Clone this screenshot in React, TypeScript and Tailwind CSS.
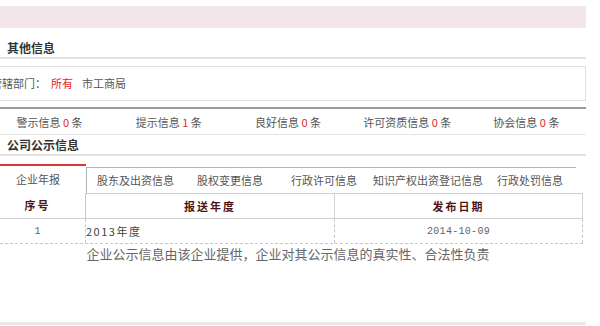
import React from "react";

const stats = [
  { label: "警示信息", n: "0" },
  { label: "提示信息", n: "1" },
  { label: "良好信息", n: "0" },
  { label: "许可资质信息", n: "0" },
  { label: "协会信息", n: "0" },
];

export default function App() {
  return (
    <div className="w-[600px] h-[326px] overflow-hidden bg-white font-['Noto_Sans_CJK_SC',sans-serif] text-[11px] text-[#555]">
      <div className="ml-[-10px] w-[596px] pt-[6px] flex flex-col">
        {/* pink bar */}
        <div className="h-[22px] bg-[#f2e5eb]" />

        {/* 其他信息 */}
        <div className="h-[29px] pt-[12px] pl-[17px] leading-[16px] text-[12px] font-bold text-[#333]">
          其他信息
        </div>
        <div className="h-[2px] bg-[#e2e2e2]" />

        <div className="mt-[7px] h-[35px] border border-[#e0e0e0] flex items-center text-[11px]">
          <span className="text-[#555]">管辖部门：</span>
          <span className="ml-[5px] text-[#e3262b]">所有</span>
          <span className="ml-[9px] text-[#555]">市工商局</span>
        </div>

        <div className="mt-[6px] h-[2px] bg-[#9a9a9a]" />

        {/* stats */}
        <div className="h-[26px] grid grid-cols-5 items-center border-b border-[#e5e5e5]">
          {stats.map((s) => (
            <div key={s.label} className="text-center leading-[14px]">
              {s.label} <span className="text-[#e3262b]">{s.n}</span> 条
            </div>
          ))}
        </div>

        {/* 公司公示信息 */}
        <div className="h-[19px] pl-[17px] flex items-center text-[12px] font-bold text-[#333]">
          公司公示信息
        </div>
        <div className="h-[2px] bg-[#e2e2e2]" />

        {/* tabs */}
        <div className="mt-[8px] flex items-end">
          <div className="w-[96px] h-[29px] border-t-2 border-[#d9383a] flex items-center justify-center">
            企业年报
          </div>
          <div className="w-[490px] h-[26px] border-t border-l border-[#b5b5b5] flex items-center">
            <div className="w-[97px] text-center">股东及出资信息</div>
            <div className="w-[92px] text-center">股权变更信息</div>
            <div className="w-[96px] text-center">行政许可信息</div>
            <div className="w-[112px] text-center">知识产权出资登记信息</div>
            <div className="w-[92px] text-center">行政处罚信息</div>
          </div>
        </div>

        {/* table */}
        <div className="w-[593px]">
          <div className="flex h-[26px] border-b border-[#d0d0d0] font-bold text-[#4d1414] tracking-[2px]">
            <div className="w-[96px] border-r border-[#c8c8c8] flex items-center justify-center">
              序号
            </div>
            <div className="w-[249px] border-t border-r border-[#d0d0d0] flex items-center justify-center">
              报送年度
            </div>
            <div className="flex-1 border-t border-r border-[#d0d0d0] flex items-center justify-center">
              发布日期
            </div>
          </div>
          <div className="flex h-[25px] border-b border-dashed border-[#c8c8c8]">
            <div className="w-[96px] border-r border-dashed border-[#c8c8c8] flex items-center justify-center font-['Liberation_Mono',monospace] text-[10px] text-[#666]">
              1
            </div>
            <div className="w-[249px] border-r border-dashed border-[#c8c8c8] flex items-center tracking-[1.5px] text-[#444]">
              2013年度
            </div>
            <div className="flex-1 border-r border-dashed border-[#c8c8c8] flex items-center justify-center font-['Liberation_Mono',monospace] text-[10px] tracking-[0.3px] text-[#666]">
              2014-10-09
            </div>
          </div>
        </div>

        <div className="leading-[20px] text-center text-[13px] text-[#666]">
          企业公示信息由该企业提供，企业对其公示信息的真实性、合法性负责
        </div>

        <div className="mt-[58px] h-[3px] bg-[#e8e8e8]" />
      </div>
    </div>
  );
}
